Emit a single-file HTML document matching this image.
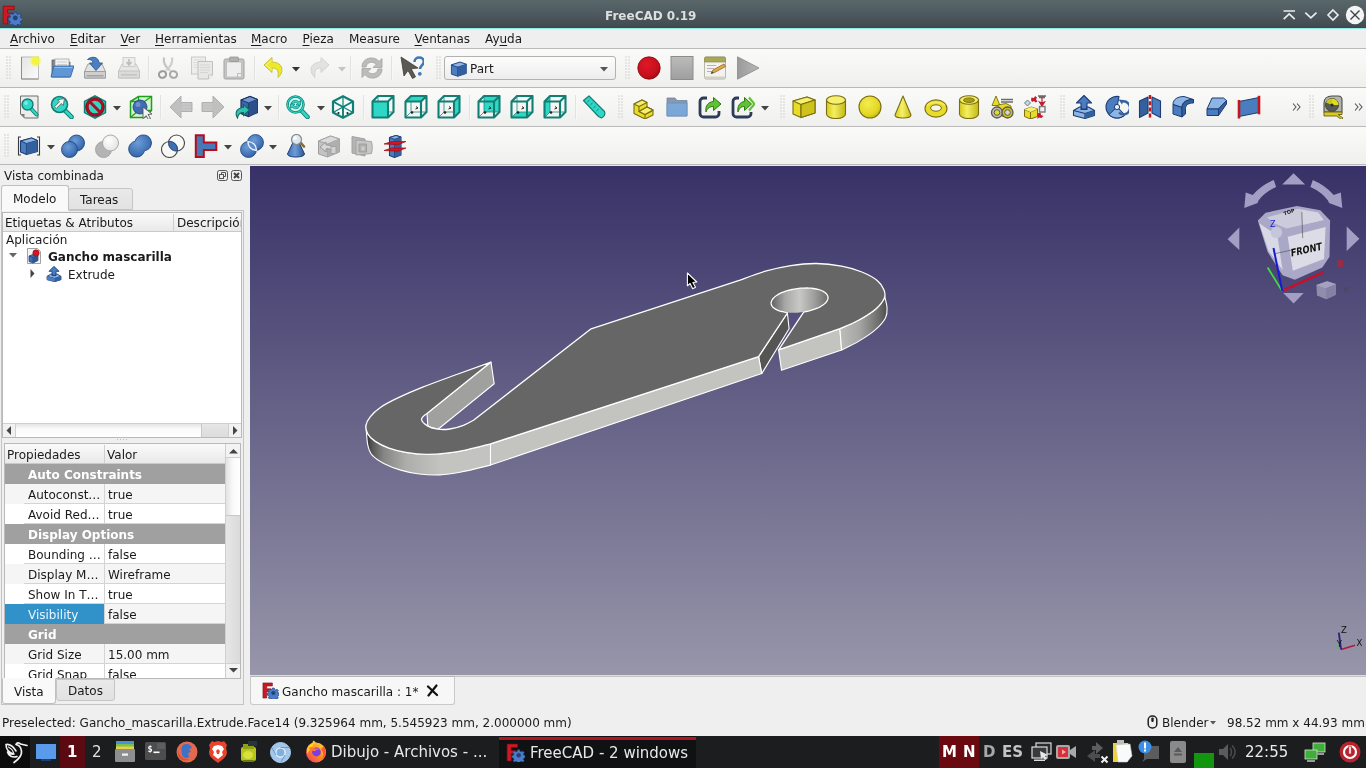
<!DOCTYPE html>
<html><head><meta charset="utf-8"><title>FreeCAD 0.19</title>
<style>
*{box-sizing:border-box;margin:0;padding:0}
html,body{width:1366px;height:768px;overflow:hidden;background:#efefef;font-family:"DejaVu Sans","Liberation Sans",sans-serif;font-size:12px;color:#1a1a1a}
.abs{position:absolute}
#titlebar{position:absolute;left:0;top:0;width:1366px;height:28px;background:linear-gradient(#59676b,#434e53 90%,#3e444c)}
#titleline{position:absolute;left:0;top:28px;width:1366px;height:1px;background:#8eeee2}
#title{position:absolute;left:605px;top:8px;white-space:nowrap;color:#dedede;font-weight:bold;font-size:12px;line-height:17px}
#menubar{position:absolute;left:0;top:29px;width:1366px;height:19px;background:#efefef}
#menubar span{position:absolute;top:2px;line-height:17px;font-size:12px;color:#1a1a1a}
#menubar u{text-decoration:underline;text-underline-offset:2px}
.tbline{position:absolute;left:0;width:1366px;height:1px;background:#b9b9b9}

#viewport{position:absolute;left:250px;top:166px;width:1116px;height:509px;background:linear-gradient(#373167,#9896aa)}
#taskbar{position:absolute;left:0;top:736px;width:1366px;height:32px;background:#1b1d1f}
#status{position:absolute;left:0;top:709px;width:1366px;height:27px;background:#efefef}

.t{position:absolute;white-space:nowrap;line-height:14px;font-size:12px}
#panel{position:absolute;left:0;top:166px;width:250px;height:543px;background:#efefef}
.frame{position:absolute;border:1px solid #b9b9b9}
.tabA{position:absolute;background:#f9f9f9;border:1px solid #c0c0c0;border-radius:3px 3px 0 0}
.tabI{position:absolute;background:linear-gradient(#e9e9e9,#e2e2e2);border:1px solid #c6c6c6;border-radius:3px 3px 0 0}
.hdr{position:absolute;background:linear-gradient(#fafafa,#e9e9e9);border-bottom:1px solid #c9c9c9}
.grp{position:absolute;left:5px;width:220px;height:20px;background:#a0a0a0;color:#fff;font-weight:bold}
.prow{position:absolute;left:5px;width:220px;height:20px;background:#fff}
.prow.alt{background:#f5f5f5}
.prow i{position:absolute;left:19px;right:0;bottom:0;height:1px;background:#d4d4d4}
.prow b{position:absolute;left:99px;top:0;bottom:0;width:1px;background:#d4d4d4}
.prow .t,.grp .t{top:4px}

#mditab{position:absolute;left:250px;top:676px;width:205px;height:29px;background:#f7f7f7;border:1px solid #c9c9c9;border-top-color:#b5b5b5;border-radius:0 0 3px 3px}
#taskbar .t{color:#e8e8e8;font-size:15px;line-height:20px;top:6px}





body{will-change:transform;transform:translateZ(0)}

.tbrow{position:absolute;left:0;width:1366px;height:38px;background:linear-gradient(#fafaf9,#f5f5f4 50%,#efefed)}
.hnd{position:absolute;width:6px;height:24px;background-image:radial-gradient(circle at 1px 1px,#d6d6d6 0.7px,transparent 1px);background-size:3px 3px;opacity:.55}
#combo{position:absolute;left:444px;top:56px;width:172px;height:24px;border:1px solid #b2b2b2;border-radius:3px;background:linear-gradient(#fdfdfd,#ededed)}
</style></head><body>
<div id="titlebar"></div><div id="titleline"></div>
<svg class="abs" style="left:2px;top:5px" width="20" height="20" viewBox="0 0 18 18"><path d="M1 1h10v3.2H5v3h4.5v3H5V17H1z" fill="#cb1a22" stroke="#7d0c12" stroke-width=".6"/><g transform="translate(12 11.6)"><path d="M-1-5.2h2l.4 1.5 1.1.5 1.4-.8 1.4 1.4-.8 1.4.5 1.1 1.5.4v2l-1.5.4-.5 1.1.8 1.4-1.4 1.4-1.4-.8-1.1.5-.4 1.5h-2l-.4-1.5-1.1-.5-1.4.8-1.4-1.4.8-1.4-.5-1.1-1.5-.4v-2l1.5-.4.5-1.1-.8-1.4 1.4-1.4 1.4.8 1.1-.5z" fill="#4a7cc8" stroke="#1f3f78" stroke-width=".7"/><circle r="1.9" fill="#27406e" stroke="#1f3f78" stroke-width=".5"/></g></svg><svg class="abs" style="left:1276px;top:0" width="90" height="28" viewBox="1276 0 90 28"><g fill="none" stroke="#ececec" stroke-width="1.6"><path d="M1283.500 11h11.500M1283.700 19.200l5.500-5.300 5.500 5.300"/><path d="M1305.300 12.600l5.600 5.300 5.600-5.300"/><path d="M1333 10l5 5-5 5-5-5z"/></g><circle cx="1355" cy="15" r="9.200" fill="#f4f4f4"/><path d="M1350.500 10.500l9 9M1359.500 10.500l-9 9" stroke="#3a4448" stroke-width="1.400"/></svg><div id="title">FreeCAD 0.19</div>
<div id="menubar"><span style="left:10px"><u>A</u>rchivo</span><span style="left:70px"><u>E</u>ditar</span><span style="left:120.5px"><u>V</u>er</span><span style="left:155px"><u>H</u>erramientas</span><span style="left:251px"><u>M</u>acro</span><span style="left:302.5px"><u>P</u>ieza</span><span style="left:349px">Measure</span><span style="left:414.5px"><u>V</u>entanas</span><span style="left:485px">Ay<u>u</u>da</span></div>
<!--TB--><div class="tbrow" style="top:49px"></div>
<div class="tbrow" style="top:88px"></div>
<div class="tbrow" style="top:127px"></div>
<div class="hnd" style="left:6px;top:56px"></div>
<svg class="abs" style="left:17.5px;top:56px" width="24" height="24" viewBox="0 0 24 24"><defs><radialGradient id="ng_1"><stop offset="0" stop-color="#f6f628"/><stop offset=".55" stop-color="#f4f440" stop-opacity=".9"/><stop offset="1" stop-color="#f6f670" stop-opacity="0"/></radialGradient><linearGradient id="npg_1" x1="0" y1="0" x2="1" y2="1"><stop offset="0" stop-color="#e4e4e4"/><stop offset="1" stop-color="#fcfcfc"/></linearGradient></defs><rect x="3.500" y="1" width="17" height="22" fill="url(#npg_1)" stroke="#b4b4b4" stroke-width=".9"/><path d="M3.500 1v22h17" fill="none" stroke="#8e8e8e" stroke-width="1"/><circle cx="17.500" cy="5" r="6.500" fill="url(#ng_1)"/></svg>
<svg class="abs" style="left:50px;top:56px" width="24" height="24" viewBox="0 0 24 24"><path d="M2 4h7l1.500 2H20v15H2z" fill="#7c8894" stroke="#58626c" stroke-width=".8"/><rect x="5" y="3" width="14" height="12" fill="#f2f2f2" stroke="#9a9a9a" stroke-width=".7"/><path d="M7 6h10M7 8.500h10M7 11h10" stroke="#c4c4c4" stroke-width=".8"/><path d="M1 21l3-11h20l-3.500 11z" fill="#5f97d6" stroke="#3568a8" stroke-width=".9"/><path d="M4.500 11.500h18" stroke="#9cc2ec" stroke-width=".9"/></svg>
<svg class="abs" style="left:83px;top:56px" width="24" height="24" viewBox="0 0 24 24"><path d="M1.500 15.500l3.500-7.500h14l3.500 7.500v6.500h-21z" fill="#e2e2e2" stroke="#9a9a9a" stroke-width=".9"/><path d="M1.500 15.500h21v6.500h-21z" fill="#cfcfcf" stroke="#9a9a9a" stroke-width=".9"/><rect x="3.500" y="19" width="17" height="1.500" fill="#a2a2a2"/><path d="M4.500 3.500C9 -.5 16 1 16 7h3.500l-6.500 7.500L6.500 7H10c0-2.500-2.500-4-5.500-3.500z" fill="#4a7fc0" stroke="#2c5a94" stroke-width=".9"/></svg>
<svg class="abs" style="left:116.5px;top:56px" width="24" height="24" viewBox="0 0 24 24"><g opacity=".62"><path d="M1.500 15l3.500-7h14l3.500 7v7h-21z" fill="#dedede" stroke="#a4a4a4" stroke-width=".9"/><path d="M1.500 15h21v7h-21z" fill="#cdcdcd" stroke="#a4a4a4" stroke-width=".9"/><rect x="4" y="18" width="16" height="1.600" fill="#aaaaaa"/><rect x="6" y="1.500" width="12" height="9" fill="#e8e8e8" stroke="#a8a8a8" stroke-width=".8"/><path d="M12 3v5M9.500 6l2.500 3 2.500-3" stroke="#9a9a9a" stroke-width="1.600" fill="none"/></g></svg>
<div class="abs" style="left:148px;top:56px;width:1px;height:24px;background:#e2e2e2"></div><div class="abs" style="left:149px;top:56px;width:1px;height:24px;background:#f8f8f8"></div>
<svg class="abs" style="left:156px;top:56px" width="24" height="24" viewBox="0 0 24 24"><g fill="none" stroke="#a9a9a9"><path d="M8 1.500c-1 5 1 9 6 13" stroke-width="2.200" stroke="#c4c4c4"/><path d="M16 1.500c1 5-1 9-6 13" stroke-width="2.200" stroke="#cfcfcf"/><ellipse cx="6.500" cy="18.500" rx="3.600" ry="3.300" stroke-width="2" transform="rotate(-25 6.500 18.500)" stroke="#9a9a9a"/><ellipse cx="17.500" cy="18.500" rx="3.600" ry="3.300" stroke-width="2" transform="rotate(25 17.500 18.500)" stroke="#a8a8a8"/></g></svg>
<svg class="abs" style="left:190px;top:56px" width="24" height="24" viewBox="0 0 24 24"><g opacity=".75"><rect x="1.500" y="1" width="14" height="17" fill="#ececec" stroke="#b4b4b4" stroke-width=".9"/><path d="M3.500 4h10M3.500 6.500h10M3.500 9h10M3.500 11.500h10" stroke="#cfcfcf" stroke-width=".8"/><path d="M8 5.500h14.500v13.500l-4 4H8z" fill="#e4e4e4" stroke="#a8a8a8" stroke-width=".9"/><path d="M10 9h10M10 11.500h10M10 14h10M10 16.500h8" stroke="#c4c4c4" stroke-width=".8"/><path d="M18.500 23v-4h4" fill="#f6f6f6" stroke="#a8a8a8" stroke-width=".8"/></g></svg>
<svg class="abs" style="left:222px;top:56px" width="24" height="24" viewBox="0 0 24 24"><rect x="2" y="3" width="20" height="20" rx="1.500" fill="#c6c6c6" stroke="#a2a2a2" stroke-width="1"/><rect x="4.500" y="6" width="15" height="15" fill="#eeeeee" stroke="#b4b4b4" stroke-width=".7"/><rect x="7.500" y="1" width="9" height="4.500" rx="1" fill="#b0b0b0" stroke="#949494" stroke-width=".8"/><path d="M15.500 21v-3.500h4" fill="none" stroke="#b0b0b0" stroke-width=".8"/></svg>
<div class="abs" style="left:254px;top:56px;width:1px;height:24px;background:#e2e2e2"></div><div class="abs" style="left:255px;top:56px;width:1px;height:24px;background:#f8f8f8"></div>
<svg class="abs" style="left:261.5px;top:56px" width="24" height="24" viewBox="0 0 24 24"><path d="M10 1.500L2 9l8 7.500V12c5 0 7 2 6 9.500 6-5 6-15-6-15.500z" fill="#ece82a" stroke="#c8c232" stroke-width="1"/><path d="M10 4L4 9l6 5" fill="none" stroke="#f8f690" stroke-width="1"/></svg>
<svg class="abs" style="left:292px;top:67px" width="8" height="5"><path d="M0 0h8l-4 4.500z" fill="#333"/></svg>
<svg class="abs" style="left:307px;top:56px" width="24" height="24" viewBox="0 0 24 24"><g opacity=".55"><path d="M14 1.500L22 9l-8 7.500V12c-5 0-7 2-6 9.500-6-5-6-15 6-15.500z" fill="#d4d4d4" stroke="#b8b8b8" stroke-width="1"/></g></svg>
<svg class="abs" style="left:337.5px;top:67px" width="8" height="5"><path d="M0 0h8l-4 4.500z" fill="#c4c4c4"/></svg>
<div class="abs" style="left:350px;top:56px;width:1px;height:24px;background:#e2e2e2"></div><div class="abs" style="left:351px;top:56px;width:1px;height:24px;background:#f8f8f8"></div>
<svg class="abs" style="left:359.5px;top:56px" width="24" height="24" viewBox="0 0 24 24"><g fill="#bcbcbc" stroke="#a2a2a2" stroke-width=".8"><path d="M2 11C2 5 7 1.500 12.500 2c3 .3 5 1.500 6.500 3.500L22 2.500v9h-9l3-3c-1-1.500-2.500-2.300-4.500-2.300C8.500 6.200 6.500 8 6 11z"/><path d="M22 13c0 6-5 9.500-10.500 9-3-.3-5-1.500-6.500-3.500L2 21.500v-9h9l-3 3c1 1.500 2.500 2.300 4.500 2.300 3 0 5-1.800 5.500-4.800z"/></g></svg>
<div class="abs" style="left:391px;top:56px;width:1px;height:24px;background:#e2e2e2"></div><div class="abs" style="left:392px;top:56px;width:1px;height:24px;background:#f8f8f8"></div>
<svg class="abs" style="left:399.5px;top:56px" width="24" height="24" viewBox="0 0 24 24"><path d="M1 1l3 19 4-5.500 4.500 8 3-1.700-4.300-8L18 12z" fill="#5a5a52" stroke="#3c3c38" stroke-width=".8"/><path d="M14.500 6c0-3 2.200-4.500 4.700-4.500 2.600 0 4.600 1.700 4.600 4.200 0 3.500-3.800 3.800-3.800 7.300" fill="none" stroke="#3f78b8" stroke-width="2.600"/><circle cx="19.800" cy="17.800" r="1.900" fill="#3f78b8"/></svg>
<div class="hnd" style="left:436px;top:56px"></div>
<div id="combo"></div>
<svg class="abs" style="left:449.5px;top:59.5px" width="17" height="17" viewBox="0 0 24 24"><path d="M2 7l12-4 9 3v13l-12 4-9-3z" fill="#4a7ec0" stroke="#1e3f78" stroke-width="1.200"/><path d="M2 7l9 3 12-4M11 10v13" fill="none" stroke="#1e3f78" stroke-width="1.200"/><path d="M2 7l9 3 12-4-9-3z" fill="#8fb6e6" stroke="#1e3f78" stroke-width="1"/><path d="M11 10l12-4v13l-12 4z" fill="#335f9e"/></svg>
<div class="t" style="left:470px;top:62px">Part</div>
<svg class="abs" style="left:600.3px;top:67px" width="8" height="5"><path d="M0 0h8l-4 4.500z" fill="#555"/></svg>
<div class="hnd" style="left:625px;top:56px"></div>
<svg class="abs" style="left:637px;top:56px" width="24" height="24" viewBox="0 0 24 24"><defs><radialGradient id="rg_13" cx=".4" cy=".35" r=".7"><stop offset="0" stop-color="#e01828"/><stop offset=".75" stop-color="#c4101c"/><stop offset="1" stop-color="#960a14"/></radialGradient></defs><circle cx="12" cy="12" r="11.200" fill="url(#rg_13)" stroke="#8a0810" stroke-width=".8"/></svg>
<svg class="abs" style="left:670px;top:56px" width="24" height="24" viewBox="0 0 24 24"><defs><linearGradient id="sg_14" x1="0" y1="0" x2="0" y2="1"><stop offset="0" stop-color="#bcbcbc"/><stop offset="1" stop-color="#9e9e9e"/></linearGradient></defs><rect x="1" y=".5" width="22" height="23" fill="url(#sg_14)" stroke="#8c8c8c" stroke-width="1"/></svg>
<svg class="abs" style="left:703px;top:56px" width="24" height="24" viewBox="0 0 24 24"><rect x="1.500" y="1" width="21" height="22" rx="1.500" fill="#f2f2ee" stroke="#b0b0a4" stroke-width=".9"/><path d="M1.500 2.500a1.500 1.500 0 0 1 1.500-1.500h18a1.500 1.500 0 0 1 1.500 1.500V6h-21z" fill="#a8a858" stroke="#8c8c44" stroke-width=".7"/><rect x="1.500" y="20.500" width="21" height="2.500" fill="#cfcfc4"/><path d="M4 9.500h9M4 12.500h7M4 15.500h6" stroke="#b4b4b4" stroke-width="1"/><path d="M8 17.500l2-3.500L21 8l1.500 2.500L11.500 16.500z" fill="#e4a84a" stroke="#94602a" stroke-width=".8"/><path d="M8 17.500l1.200-2.100 1.300 1.600z" fill="#3a3a3a"/></svg>
<svg class="abs" style="left:736px;top:56px" width="24" height="24" viewBox="0 0 24 24"><defs><linearGradient id="pg_16" x1="0" y1="0" x2="1" y2="0"><stop offset="0" stop-color="#9a9a9a"/><stop offset="1" stop-color="#b8b8b8"/></linearGradient></defs><path d="M1.500 .8L23 12 1.500 23.200z" fill="url(#pg_16)" stroke="#909090" stroke-width=".9"/></svg>
<div class="hnd" style="left:4px;top:95px"></div>
<svg class="abs" style="left:17px;top:95px" width="24" height="24" viewBox="0 0 24 24"><path d="M3.500 1h17.500v22H7.500l-4-4z" fill="#ececec" stroke="#6e6e6e" stroke-width="1"/><path d="M3.500 19h4v4z" fill="#7c7c7c"/><path d="M13 12.500l6.500 7" stroke="#127f74" stroke-width="4" stroke-linecap="round"/><path d="M13 12.500l6.500 7" stroke="#2fd8c6" stroke-width="2.200" stroke-linecap="round"/><circle cx="10.500" cy="9.500" r="5.500" fill="#2fd8c6" stroke="#127f74" stroke-width="1.400"/><circle cx="9" cy="8" r="2" fill="#8cf0e4" opacity=".8"/></svg>
<svg class="abs" style="left:50px;top:95px" width="24" height="24" viewBox="0 0 24 24"><path d="M14 14.500l7.500 7.500" stroke="#127f74" stroke-width="4.600" stroke-linecap="round"/><path d="M14 14.500l7.500 7.500" stroke="#2fd8c6" stroke-width="2.600" stroke-linecap="round"/><circle cx="9.500" cy="9.500" r="8" fill="#2fd8c6" stroke="#127f74" stroke-width="1.600"/><path d="M14.500 3.500l-1.200 7-2-2-5 5-1.800-1.800 5-5-2-2z" fill="#f4f4f4" stroke="#5a5a5a" stroke-width=".8"/></svg>
<svg class="abs" style="left:83px;top:95px" width="24" height="24" viewBox="0 0 24 24"><path d="M12 .8l10.500 5.600v11.200L12 23.200 1.500 17.600V6.400z" fill="#2fd8c6" stroke="#127f74" stroke-width="1.400"/><circle cx="12" cy="12" r="7.800" fill="none" stroke="#b00c20" stroke-width="3"/><path d="M6.800 6.800l10.400 10.400" stroke="#b00c20" stroke-width="3"/><circle cx="12" cy="12" r="9.400" fill="none" stroke="#5a0810" stroke-width=".7"/></svg>
<svg class="abs" style="left:113px;top:106px" width="8" height="5"><path d="M0 0h8l-4 4.500z" fill="#444"/></svg>
<svg class="abs" style="left:128.5px;top:95px" width="24" height="24" viewBox="0 0 24 24"><path d="M1.500 6.500l8-5h13v14l-7 7h-14z" fill="#d6f4d0" stroke="#1ea01e" stroke-width="1.500"/><path d="M1.500 6.500h14v16M15.500 6.500l7-5M9.500 1.500v14h13M9.500 15.500l-8 7" fill="none" stroke="#1ea01e" stroke-width="1.300"/><circle cx="11" cy="12" r="7" fill="#3f6cb4" stroke="#1e3f78" stroke-width=".8"/><circle cx="9" cy="9.500" r="2.500" fill="#7ea4dc" opacity=".7"/><path d="M14 12l9 7-4 .5 2.500 4-2 1.200-2.500-4-3 3z" fill="#f4f4f4" stroke="#555" stroke-width=".9"/></svg>
<div class="abs" style="left:160px;top:95px;width:1px;height:24px;background:#e2e2e2"></div><div class="abs" style="left:161px;top:95px;width:1px;height:24px;background:#f8f8f8"></div>
<svg class="abs" style="left:168.5px;top:95px" width="24" height="24" viewBox="0 0 24 24"><path d="M1 12L12 1v6.500h11v9H12V23z" fill="#c0c0c0" stroke="#b0b0b0" stroke-width="1"/><path d="M13 9h9M13 12h9M13 15h9" stroke="#d0d0d0" stroke-width=".8"/></svg>
<svg class="abs" style="left:200.5px;top:95px" width="24" height="24" viewBox="0 0 24 24"><path d="M23 12L12 1v6.500H1v9h11V23z" fill="#c0c0c0" stroke="#b0b0b0" stroke-width="1"/><path d="M2 9h9M2 12h9M2 15h9" stroke="#d0d0d0" stroke-width=".8"/></svg>
<svg class="abs" style="left:233.5px;top:95px" width="24" height="24" viewBox="0 0 24 24"><path d="M7 5l9-3.500 7.500 3v13l-9 4-7.500-3z" fill="#3d68ac" stroke="#182f5c" stroke-width="1.200"/><path d="M7 5l7.500 3 9-3.500-7.500-3z" fill="#6e98d4" stroke="#182f5c" stroke-width="1"/><path d="M14.500 8v13.500" stroke="#182f5c" stroke-width="1.200"/><path d="M14.500 8l9-3.500v13l-9 4z" fill="#2d508c"/><path d="M3.500 23c-3-5-1-10 6-10.500V9.500l6 5.500-6 5.500V17.500c-3.500 0-5.500 2-6 5.500z" fill="#2ec4b0" stroke="#0e6a60" stroke-width="1.100"/></svg>
<svg class="abs" style="left:264px;top:106px" width="8" height="5"><path d="M0 0h8l-4 4.500z" fill="#444"/></svg>
<div class="abs" style="left:278px;top:95px;width:1px;height:24px;background:#e2e2e2"></div><div class="abs" style="left:279px;top:95px;width:1px;height:24px;background:#f8f8f8"></div>
<svg class="abs" style="left:286px;top:95px" width="24" height="24" viewBox="0 0 24 24"><path d="M14.500 14.500l7 7.500" stroke="#127f74" stroke-width="4.600" stroke-linecap="round"/><path d="M14.500 14.500l7 7.500" stroke="#2fd8c6" stroke-width="2.600" stroke-linecap="round"/><circle cx="9.500" cy="9.500" r="8" fill="#c8f4ee" stroke="#127f74" stroke-width="2.600"/><circle cx="9.500" cy="9.500" r="8" fill="none" stroke="#2fd8c6" stroke-width="1.200"/><path d="M5 8.500c.5-3 5-4.500 8-1.500l1.500-1.500v4.500H10l1.500-1.500c-1.500-1.500-4-1.200-4.500 0zM14 10.500c-.5 3-5 4.500-8 1.500l-1.500 1.500V9h4.500l-1.500 1.500c1.500 1.500 4 1.200 4.500 0z" fill="#2fd8c6" stroke="#127f74" stroke-width=".7"/></svg>
<svg class="abs" style="left:316.5px;top:106px" width="8" height="5"><path d="M0 0h8l-4 4.500z" fill="#444"/></svg>
<svg class="abs" style="left:331.3px;top:95px" width="24" height="24" viewBox="0 0 24 24"><path d="M12 1.200l10 5.300v11L12 22.800 2 17.500v-11z" fill="#f2fbf9" stroke="#127f74" stroke-width="2.200" stroke-linejoin="round"/><path d="M12 1v11M12 12l10 5.500M12 12L2 17.500" fill="none" stroke="#127f74" stroke-width="1.200"/><path d="M2 6.500L12 12l10-5.500M12 12v11" fill="none" stroke="#127f74" stroke-width="1.900"/><circle cx="7.500" cy="18" r="1.100" fill="#222"/><circle cx="16.500" cy="18" r="1.100" fill="#222"/></svg>
<div class="abs" style="left:363px;top:95px;width:1px;height:24px;background:#e2e2e2"></div><div class="abs" style="left:364px;top:95px;width:1px;height:24px;background:#f8f8f8"></div>
<svg class="abs" style="left:371px;top:95px" width="24" height="24" viewBox="0 0 24 24"><path d="M7 1V17H22.5M7 17L1.5 22.5" fill="none" stroke="#127f74" stroke-width="1" opacity=".75"/><path d="M1.5 6.5H17V22.5H1.5z" fill="#2fd8c6"/><path d="M1.5 6.5H17V22.5H1.5zM1.5 6.5L7 1H22.5L17 6.5M22.5 1V17L17 22.5" fill="none" stroke="#127f74" stroke-width="2.100" stroke-linejoin="round"/></svg>
<svg class="abs" style="left:404px;top:95px" width="24" height="24" viewBox="0 0 24 24"><path d="M7 1V17H22.5M7 17L1.5 22.5" fill="none" stroke="#127f74" stroke-width="1" opacity=".75"/><circle cx="8" cy="17.500" r="1.300" fill="#222"/><path d="M12 11.500l2 1.500-2.500 1" stroke="#222" stroke-width="1" fill="none"/><path d="M1.5 6.5L7 1L22.5 1L17 6.5z" fill="#2fd8c6"/><path d="M1.5 6.5H17V22.5H1.5zM1.5 6.5L7 1H22.5L17 6.5M22.5 1V17L17 22.5" fill="none" stroke="#127f74" stroke-width="2.100" stroke-linejoin="round"/></svg>
<svg class="abs" style="left:437px;top:95px" width="24" height="24" viewBox="0 0 24 24"><path d="M7 1V17H22.5M7 17L1.5 22.5" fill="none" stroke="#127f74" stroke-width="1" opacity=".75"/><circle cx="8" cy="17.500" r="1.300" fill="#222"/><path d="M12 11.500l2 1.500-2.500 1" stroke="#222" stroke-width="1" fill="none"/><path d="M17 6.5L22.5 1L22.5 17L17 22.5z" fill="#2fd8c6"/><path d="M1.5 6.5H17V22.5H1.5zM1.5 6.5L7 1H22.5L17 6.5M22.5 1V17L17 22.5" fill="none" stroke="#127f74" stroke-width="2.100" stroke-linejoin="round"/></svg>
<div class="abs" style="left:469px;top:95px;width:1px;height:24px;background:#e2e2e2"></div><div class="abs" style="left:470px;top:95px;width:1px;height:24px;background:#f8f8f8"></div>
<svg class="abs" style="left:477px;top:95px" width="24" height="24" viewBox="0 0 24 24"><path d="M7 1H22.5V17H7z" fill="#2fd8c6"/><path d="M7 1V17H22.5M7 17L1.5 22.5" fill="none" stroke="#127f74" stroke-width="1" opacity=".75"/><circle cx="8" cy="17.500" r="1.300" fill="#222"/><path d="M12 11.500l2 1.500-2.500 1" stroke="#222" stroke-width="1" fill="none"/><path d="M1.5 6.5H17V22.5H1.5zM1.5 6.5L7 1H22.5L17 6.5M22.5 1V17L17 22.5" fill="none" stroke="#127f74" stroke-width="2.100" stroke-linejoin="round"/></svg>
<svg class="abs" style="left:510px;top:95px" width="24" height="24" viewBox="0 0 24 24"><path d="M1.5 22.5L17 22.5L22.5 17L7 17z" fill="#2fd8c6"/><path d="M7 1V17H22.5M7 17L1.5 22.5" fill="none" stroke="#127f74" stroke-width="1" opacity=".75"/><circle cx="8" cy="17.500" r="1.300" fill="#222"/><path d="M12 11.500l2 1.500-2.500 1" stroke="#222" stroke-width="1" fill="none"/><path d="M1.5 6.5H17V22.5H1.5zM1.5 6.5L7 1H22.5L17 6.5M22.5 1V17L17 22.5" fill="none" stroke="#127f74" stroke-width="2.100" stroke-linejoin="round"/></svg>
<svg class="abs" style="left:543px;top:95px" width="24" height="24" viewBox="0 0 24 24"><path d="M1.5 6.5L7 1L7 17L1.5 22.5z" fill="#2fd8c6"/><path d="M7 1V17H22.5M7 17L1.5 22.5" fill="none" stroke="#127f74" stroke-width="1" opacity=".75"/><circle cx="8" cy="17.500" r="1.300" fill="#222"/><path d="M12 11.500l2 1.500-2.500 1" stroke="#222" stroke-width="1" fill="none"/><path d="M1.5 6.5H17V22.5H1.5zM1.5 6.5L7 1H22.5L17 6.5M22.5 1V17L17 22.5" fill="none" stroke="#127f74" stroke-width="2.100" stroke-linejoin="round"/></svg>
<div class="abs" style="left:575px;top:95px;width:1px;height:24px;background:#e2e2e2"></div><div class="abs" style="left:576px;top:95px;width:1px;height:24px;background:#f8f8f8"></div>
<svg class="abs" style="left:582px;top:95px" width="24" height="24" viewBox="0 0 24 24"><path d="M1.500 5.500L7 1l15.500 15.500c1 2 0 5.500-3 6.500l-3-1.500z" fill="#2fd8c6" stroke="#127f74" stroke-width="1.200" stroke-linejoin="round"/><path d="M7.500 5l-2 1.800M10.500 8l-2 1.800M13.500 11l-2 1.800M16.500 14l-2 1.800" stroke="#127f74" stroke-width="1"/></svg>
<div class="hnd" style="left:618px;top:95px"></div>
<svg class="abs" style="left:632px;top:95px" width="24" height="24" viewBox="0 0 24 24"><g stroke="#7a6e10" stroke-width="1.100" stroke-linejoin="round"><path d="M2 9l8-4 5 2.500v4.500l6 3v5l-8 4-11-5.500z" fill="#e8dc28"/><path d="M2 9l5 2.500 8-4-5-2.500z" fill="#f6f070"/><path d="M7 11.500v5l6 3 8-4" fill="none"/><path d="M7 16.500l8-4.500 6 3" fill="none"/><path d="M13 19.500V24" fill="none"/><path d="M7 16.500l6 3 8-4.500-6-3z" fill="#f6f070"/></g></svg>
<svg class="abs" style="left:665px;top:95px" width="24" height="24" viewBox="0 0 24 24"><g opacity=".9"><path d="M2 3h8l2 2.500h10V21H2z" fill="#7c8ea8" stroke="#64788f" stroke-width=".8"/><path d="M2 8h20v13H2z" fill="#6f9fd6" stroke="#5c86b8" stroke-width=".8"/></g></svg>
<svg class="abs" style="left:698px;top:95px" width="24" height="24" viewBox="0 0 24 24"><path d="M9 3H5.500A3.500 3.500 0 0 0 2 6.500v12A3.500 3.500 0 0 0 5.500 22h12a3.500 3.500 0 0 0 3.500-3.500V16" fill="none" stroke="#2a3c58" stroke-width="2.800"/><path d="M8 17c-1-6 2-10 7.500-10.500V2.500l7.500 6.500-7.500 6.500v-4c-4 0-6 1.500-7.500 5.500z" fill="#5ec232" stroke="#2a7a14" stroke-width="1"/></svg>
<svg class="abs" style="left:731px;top:95px" width="24" height="24" viewBox="0 0 24 24"><path d="M8 3H5.500A3.500 3.500 0 0 0 2 6.500v12A3.500 3.500 0 0 0 5.500 22h11a3.500 3.500 0 0 0 3.500-3.500V17" fill="none" stroke="#2a3c58" stroke-width="2.800"/><path d="M18 2.500l5.500 6.500-5.500 6.500" fill="none" stroke="#5ec232" stroke-width="2.200"/><path d="M7 17c-1-6 2-10 6.500-10.500V2.500l7 6.500-7 6.500v-4c-3.500 0-5 1.500-6.500 5.500z" fill="#5ec232" stroke="#2a7a14" stroke-width="1"/></svg>
<svg class="abs" style="left:760.5px;top:106px" width="8" height="5"><path d="M0 0h8l-4 4.500z" fill="#444"/></svg>
<div class="hnd" style="left:780px;top:95px"></div>
<svg class="abs" style="left:791.7px;top:95px" width="24" height="24" viewBox="0 0 24 24"><g stroke="#7a6e10" stroke-width="1.100" stroke-linejoin="round"><path d="M1 6l14-4 8 3v13l-14 4.500-8-3.500z" fill="#e8dc28"/><path d="M1 6l8 3.500 14-4.500-8-3z" fill="#f6f070"/><path d="M9 9.500v13" fill="none"/><path d="M9 9.500l14-4.500v13l-14 4.500z" fill="#cfc21c"/></g></svg>
<svg class="abs" style="left:824.3px;top:95px" width="24" height="24" viewBox="0 0 24 24"><defs><linearGradient id="yc_38" x1="0" y1="0" x2="1" y2="0"><stop offset="0" stop-color="#d8cc20"/><stop offset=".4" stop-color="#f4ee60"/><stop offset="1" stop-color="#c4b818"/></linearGradient></defs><path d="M2.500 5v14c0 2.500 4.200 4.500 9.500 4.500s9.500-2 9.500-4.500V5z" fill="url(#yc_38)" stroke="#7a6e10" stroke-width="1.100"/><ellipse cx="12" cy="5" rx="9.500" ry="4.200" fill="#f6f070" stroke="#7a6e10" stroke-width="1.100"/></svg>
<svg class="abs" style="left:858px;top:95px" width="24" height="24" viewBox="0 0 24 24"><defs><radialGradient id="ys_39" cx=".4" cy=".35" r=".7"><stop offset="0" stop-color="#f2ec50"/><stop offset=".7" stop-color="#e4d824"/><stop offset="1" stop-color="#c0b418"/></radialGradient></defs><circle cx="12" cy="12" r="11" fill="url(#ys_39)" stroke="#7a6e10" stroke-width="1.100"/></svg>
<svg class="abs" style="left:891px;top:95px" width="24" height="24" viewBox="0 0 24 24"><defs><linearGradient id="yn_40" x1="0" y1="0" x2="1" y2="0"><stop offset="0" stop-color="#d8cc20"/><stop offset=".45" stop-color="#f6f068"/><stop offset="1" stop-color="#c8bc18"/></linearGradient></defs><path d="M12 1L4 20c0 1.800 3.500 3 8 3s8-1.200 8-3z" fill="url(#yn_40)" stroke="#7a6e10" stroke-width="1.100" stroke-linejoin="round"/></svg>
<svg class="abs" style="left:924px;top:95px" width="24" height="24" viewBox="0 0 24 24"><ellipse cx="12" cy="13.500" rx="11" ry="8.600" fill="#e8dc28" stroke="#7a6e10" stroke-width="1.100"/><ellipse cx="12" cy="13" rx="5.400" ry="3.200" fill="#f4f4f0" stroke="#7a6e10" stroke-width="1"/><path d="M3 11c2-4 14-5 18-.5" fill="none" stroke="#f6f070" stroke-width="1.400" opacity=".8"/></svg>
<svg class="abs" style="left:956.6px;top:95px" width="24" height="24" viewBox="0 0 24 24"><defs><linearGradient id="yt_42" x1="0" y1="0" x2="1" y2="0"><stop offset="0" stop-color="#d4c81e"/><stop offset=".4" stop-color="#f4ee60"/><stop offset="1" stop-color="#c4b818"/></linearGradient></defs><path d="M2.500 5v14c0 2.500 4.200 4.500 9.500 4.500s9.500-2 9.500-4.500V5z" fill="url(#yt_42)" stroke="#7a6e10" stroke-width="1.100"/><ellipse cx="12" cy="5" rx="9.500" ry="4.200" fill="#f6f070" stroke="#7a6e10" stroke-width="1.100"/><ellipse cx="12" cy="5.200" rx="5.500" ry="2.300" fill="#a89c14" stroke="#7a6e10" stroke-width=".9"/></svg>
<svg class="abs" style="left:990px;top:95px" width="24" height="24" viewBox="0 0 24 24"><path d="M6 1l-4 9.500h8z" fill="#e8dc28" stroke="#7a6e10" stroke-width=".9"/><path d="M11 4.500h12M11 7h12" stroke="#6c6c6c" stroke-width="1.600"/><path d="M8 10l8-1.500 5 2.500v8l-8 2.500-5-3z" fill="#e8dc28" stroke="#7a6e10" stroke-width=".9"/><circle cx="7" cy="17.500" r="5.500" fill="#bdbdb0" stroke="#5a5a54" stroke-width="1.300"/><circle cx="7" cy="17.500" r="2.800" fill="#e8dc28" stroke="#5a5a54" stroke-width="1"/><circle cx="17.500" cy="17.500" r="5.500" fill="#cfc21c" stroke="#5a5a54" stroke-width="1.300"/><circle cx="17.500" cy="17.500" r="2.800" fill="#d8d8c8" stroke="#5a5a54" stroke-width="1"/></svg>
<svg class="abs" style="left:1023px;top:95px" width="24" height="24" viewBox="0 0 24 24"><path d="M1.500 14.500l7-2.500 6 2v7.500l-7 2.500-6-2.500z" fill="#e8dc28" stroke="#7a6e10" stroke-width="1"/><path d="M1.500 14.500l6 2.500 7-3M7.500 17v7" fill="none" stroke="#7a6e10" stroke-width="1"/><path d="M1.500 14.500l6 2.500 7-3-6-2z" fill="#f6f070"/><path d="M4.500 5l3 3-3 3-3-3z" fill="#c8d4dc" stroke="#6a7a88" stroke-width="1"/><path d="M8.500 2.500l2.500 .5 1-2 2 1.500-1 2 1.500 2-2 1-1.500-1.500-2 1-1-2z" fill="#c8182c"/><path d="M15 1h8M16 2.500h6" stroke="#6a6a6a" stroke-width="1.600"/><path d="M19 3v5l-2.500-1 2.500 4 2.500-4-2.500 1" fill="#c8182c" stroke="#c8182c" stroke-width="1.200"/><rect x="16.500" y="11.500" width="5.500" height="5.500" fill="#f0f0f0" stroke="#7a7a7a" stroke-width="1.400"/><path d="M14.500 18.500l3-1 .5 2.500 2.500 1-2 2-2.500-.5-1.500 1.500z" fill="#c8182c"/></svg>
<div class="hnd" style="left:1060px;top:95px"></div>
<svg class="abs" style="left:1071.7px;top:95px" width="24" height="24" viewBox="0 0 24 24"><path d="M12 .5L4.500 8H9v6h6V8h4.500z" fill="#4a7cc0" stroke="#1c3c74" stroke-width="1.100" stroke-linejoin="round"/><path d="M1.500 15.500l6-3.500H9v2.500h6V12h1.500l6 3.500v5l-9.500 3-11.500-3z" fill="#8cb4e4" stroke="#1c3c74" stroke-width="1.100" stroke-linejoin="round"/><path d="M1.500 15.500l11.500 3 9.500-3M13 18.500v5" fill="none" stroke="#1c3c74" stroke-width="1.100"/><path d="M13 18.500l9.500-3v5l-9.500 3z" fill="#35609e"/></svg>
<svg class="abs" style="left:1105px;top:95px" width="24" height="24" viewBox="0 0 24 24"><path d="M12 12L14 1.500C7 .5 1 5.500 1 12c0 6 5 11 11 11 3 0 5.500-1 7.500-3z" fill="#4a7cc0" stroke="#1c3c74" stroke-width="1.100" stroke-linejoin="round"/><path d="M12 12L4 19.500c2 2 4.800 3.500 8 3.500 3 0 5.500-1 7.500-3z" fill="#8cb4e4" stroke="#1c3c74" stroke-width="1"/><circle cx="12" cy="12" r="2.600" fill="#e8eef8" stroke="#1c3c74" stroke-width="1"/><path d="M17 6.500a6.500 6.500 0 1 1-3 11" fill="none" stroke="#35609e" stroke-width="2.400"/><path d="M13.500 4.500l5 .5-1.500 4.500z" fill="#35609e"/></svg>
<svg class="abs" style="left:1138px;top:95px" width="24" height="24" viewBox="0 0 24 24"><path d="M1.500 6l8.500-4v16l-8.500 4.500z" fill="#35609e" stroke="#1c3c74" stroke-width="1.100" stroke-linejoin="round"/><path d="M22.500 6L14 2v16l8.500 4.500z" fill="#4a7cc0" stroke="#1c3c74" stroke-width="1.100" stroke-linejoin="round"/><path d="M12 0v24" stroke="#c4141c" stroke-width="2.400" stroke-dasharray="4 2.200"/></svg>
<svg class="abs" style="left:1171px;top:95px" width="24" height="24" viewBox="0 0 24 24"><path d="M2 9.500C2 4 7 1.500 13 1.500l9.500 3C16 4.500 11 7 11 12.500z" fill="#8cb4e4" stroke="#1c3c74" stroke-width="1" stroke-linejoin="round"/><path d="M2 9.500l9 3V22l-9-3z" fill="#4a7cc0" stroke="#1c3c74" stroke-width="1" stroke-linejoin="round"/><path d="M11 12.500C11 7 16 4.500 22.500 4.500V8c-5 0-8 2-8 5.500V19L11 22z" fill="#35609e" stroke="#1c3c74" stroke-width="1" stroke-linejoin="round"/></svg>
<svg class="abs" style="left:1204px;top:95px" width="24" height="24" viewBox="0 0 24 24"><path d="M8 3h11.500l3 2.500-8 8.500H3z" fill="#8cb4e4" stroke="#1c3c74" stroke-width="1" stroke-linejoin="round"/><path d="M3 14h11.500v6.500H3z" fill="#4a7cc0" stroke="#1c3c74" stroke-width="1" stroke-linejoin="round"/><path d="M14.500 14l8-8.500V9l-8 11.500z" fill="#35609e" stroke="#1c3c74" stroke-width="1" stroke-linejoin="round"/></svg>
<svg class="abs" style="left:1237px;top:95px" width="24" height="24" viewBox="0 0 24 24"><path d="M2 6.500l20-4v15l-20 4z" fill="#4a7cc0" stroke="#1c3c74" stroke-width="1"/><path d="M2 5v18.500" stroke="#c4141c" stroke-width="2.600"/><path d="M22 .8v18.500" stroke="#c4141c" stroke-width="2.600"/></svg>
<svg class="abs" style="left:1291.5px;top:103px" width="9" height="8"><path d="M1 .5l3 3.500-3 3.500M5 .5l3 3.500-3 3.500" fill="none" stroke="#555" stroke-width="1.100"/></svg>
<div class="hnd" style="left:1309px;top:95px"></div>
<svg class="abs" style="left:1321px;top:95px" width="24" height="24" viewBox="0 0 24 24"><path d="M3 8c0-4 3-7 8-7h6c3 0 4 2 4 4v12H3z" fill="#b4b4ac" stroke="#4c4c48" stroke-width="1.100"/><circle cx="11" cy="10" r="6.500" fill="#5a5a54" stroke="#3a3a38" stroke-width=".9"/><path d="M11 10V3.500a6.500 6.500 0 0 1 6.500 6.500z" fill="#dcdc20"/><path d="M11 10l-6-2.500A6.500 6.500 0 0 1 11 3.500z" fill="#c8c81c"/><circle cx="11" cy="10" r="1.600" fill="#2a2a28"/><path d="M3 17h18v2.500h-4l5 3.500-1.500 1.500-5-3.500H3z" fill="#d8c828" stroke="#6a6210" stroke-width=".9"/></svg>
<svg class="abs" style="left:1353.5px;top:103px" width="9" height="8"><path d="M1 .5l3 3.500-3 3.500M5 .5l3 3.500-3 3.500" fill="none" stroke="#555" stroke-width="1.100"/></svg>
<div class="hnd" style="left:4px;top:134px"></div>
<svg class="abs" style="left:17px;top:134px" width="24" height="24" viewBox="0 0 24 24"><path d="M4 3H1.500v18H4M20 3h2.500v18H20" fill="none" stroke="#3a3a3a" stroke-width="1.100"/><path d="M3.500 7l11-3 6 2.500v11l-11 3-6-2.500z" fill="#4a7cc0" stroke="#1c3c74" stroke-width="1.100" stroke-linejoin="round"/><path d="M3.500 7l6 2.500 11-3-6-2.500z" fill="#8cb4e4" stroke="#1c3c74" stroke-width="1"/><path d="M9.500 9.500v11" stroke="#1c3c74" stroke-width="1.100"/><path d="M9.500 9.500l11-3v11l-11 3z" fill="#35609e"/></svg>
<svg class="abs" style="left:47.3px;top:145px" width="8" height="5"><path d="M0 0h8l-4 4.500z" fill="#444"/></svg>
<svg class="abs" style="left:61.3px;top:134px" width="24" height="24" viewBox="0 0 24 24"><defs><radialGradient id="sb_53" cx=".4" cy=".35" r=".75"><stop offset="0" stop-color="#6c9cd8"/><stop offset=".7" stop-color="#3f70b4"/><stop offset="1" stop-color="#2c558e"/></radialGradient></defs><circle cx="15.500" cy="9" r="8" fill="url(#sb_53)" stroke="#24487e" stroke-width=".9"/><circle cx="8.500" cy="15.500" r="8" fill="url(#sb_53)" stroke="#24487e" stroke-width=".9"/></svg>
<svg class="abs" style="left:94.7px;top:134px" width="24" height="24" viewBox="0 0 24 24"><defs><radialGradient id="sgw_54" cx=".4" cy=".35" r=".75"><stop offset="0" stop-color="#ffffff"/><stop offset="1" stop-color="#e0e0e0"/></radialGradient></defs><circle cx="8.500" cy="15.500" r="8" fill="#b4b4b4" stroke="#a0a0a0" stroke-width=".9"/><circle cx="15.500" cy="9" r="8" fill="url(#sgw_54)" stroke="#a8a8a8" stroke-width="1"/></svg>
<svg class="abs" style="left:127.7px;top:134px" width="24" height="24" viewBox="0 0 24 24"><defs><radialGradient id="sb_55" cx=".4" cy=".35" r=".75"><stop offset="0" stop-color="#6c9cd8"/><stop offset=".7" stop-color="#3f70b4"/><stop offset="1" stop-color="#2c558e"/></radialGradient></defs><path d="M15.500 1a8 8 0 0 1 6.800 12.200c-1.200 2-3.500 3-5.800 3.500a8 8 0 1 1-9.300-9.500A8 8 0 0 1 15.500 1z" fill="url(#sb_55)" stroke="#24487e" stroke-width=".9"/></svg>
<svg class="abs" style="left:160.5px;top:134px" width="24" height="24" viewBox="0 0 24 24"><circle cx="15.500" cy="9" r="8" fill="#fafafa" stroke="#4a4a4a" stroke-width="1.100"/><circle cx="8.500" cy="15.500" r="8" fill="#fafafa" fill-opacity=".6" stroke="#4a4a4a" stroke-width="1.100"/><path d="M7.700 7.500a8 8 0 0 1 8.600 9.500A8 8 0 0 1 7.700 7.500z" fill="#3f70b4" stroke="#24487e" stroke-width=".9"/></svg>
<svg class="abs" style="left:194px;top:134px" width="24" height="24" viewBox="0 0 24 24"><path d="M1.800 1.200h8v7.300h12.500v7.500H9.800v7H1.800z" fill="#4878b8" stroke="#b80c1c" stroke-width="2" stroke-linejoin="miter"/></svg>
<svg class="abs" style="left:224px;top:145px" width="8" height="5"><path d="M0 0h8l-4 4.500z" fill="#444"/></svg>
<svg class="abs" style="left:239.5px;top:134px" width="24" height="24" viewBox="0 0 24 24"><defs><radialGradient id="sb_58" cx=".4" cy=".35" r=".75"><stop offset="0" stop-color="#6c9cd8"/><stop offset=".7" stop-color="#3f70b4"/><stop offset="1" stop-color="#2c558e"/></radialGradient></defs><circle cx="15.500" cy="8.500" r="8" fill="url(#sb_58)" stroke="#24487e" stroke-width=".8"/><circle cx="8.500" cy="15.500" r="8" fill="url(#sb_58)" stroke="#24487e" stroke-width=".8"/><path d="M8 7.600a8 8 0 0 1 8.300 8.600A8 8 0 0 1 8 7.600z" fill="#5a8acc" stroke="#eef4fc" stroke-width="1.400"/></svg>
<svg class="abs" style="left:269px;top:145px" width="8" height="5"><path d="M0 0h8l-4 4.500z" fill="#444"/></svg>
<svg class="abs" style="left:284px;top:134px" width="24" height="24" viewBox="0 0 24 24"><defs><linearGradient id="ck_59" x1="0" y1="0" x2="1" y2="0"><stop offset="0" stop-color="#3f70b4"/><stop offset=".45" stop-color="#6c9cd8"/><stop offset="1" stop-color="#2c558e"/></linearGradient></defs><path d="M12 2L3.500 20c0 1.800 3.500 3 8.500 3s8.500-1.200 8.500-3z" fill="url(#ck_59)" stroke="#1c3c74" stroke-width="1" stroke-linejoin="round"/><path d="M16 8l4 4.500" stroke="#8a6a2a" stroke-width="2.600" stroke-linecap="round"/><circle cx="12.500" cy="5.500" r="5" fill="#dce8f0" stroke="#8a8a8a" stroke-width="1.200"/><circle cx="11" cy="4" r="2" fill="#fff" opacity=".8"/></svg>
<svg class="abs" style="left:316.6px;top:134px" width="24" height="24" viewBox="0 0 24 24"><g opacity=".8"><path d="M1.500 7l12-5 9 3v13l-12 5-9-3z" fill="#b8b8b8" stroke="#8a8a8a" stroke-width="1"/><path d="M1.500 7l9 3 12-5-9-3z" fill="#d4d4d4" stroke="#8a8a8a" stroke-width=".9"/><path d="M10.500 10v13" stroke="#8a8a8a" stroke-width="1"/><path d="M10.500 10l12-5v13l-12 5z" fill="#9e9e9e"/><path d="M3 13l6-5v3c5 0 8 2 8.500 7-2-2.500-4.500-3.500-8.500-3.200V18z" fill="#d0d0d0" stroke="#7c7c7c" stroke-width=".9"/><rect x="14" y="12.500" width="5" height="7" fill="#c8c8c8" stroke="#8a8a8a" stroke-width=".8"/></g></svg>
<svg class="abs" style="left:350.3px;top:134px" width="24" height="24" viewBox="0 0 24 24"><g opacity=".8"><path d="M2 2.500l13 2.500v17L2 19z" fill="#a4a4a4" stroke="#8c8c8c" stroke-width="1"/><path d="M6 6l15.500 1.500c1 4 1 8 0 12L6 21z" fill="#bdbdbd" stroke="#909090" stroke-width="1"/><path d="M9 10h7.500v8H9z" fill="#a0a0a0" stroke="#868686" stroke-width=".9"/><path d="M11.500 12.500h3v4h-3z" fill="#c4c4c4"/></g></svg>
<svg class="abs" style="left:383px;top:134px" width="24" height="24" viewBox="0 0 24 24"><path d="M6.500 3.500l6.500-2 5 1.500v18l-6.500 2.500-5-2z" fill="#4a7cc0" stroke="#1c3c74" stroke-width="1.100" stroke-linejoin="round"/><path d="M6.500 3.500l5 1.800 6.500-2.300-5-1.500z" fill="#8cb4e4" stroke="#1c3c74" stroke-width=".9"/><path d="M11.500 5.300v18" stroke="#1c3c74" stroke-width="1"/><path d="M11.500 5.300l6.500-2.300v18l-6.500 2.500z" fill="#35609e"/><path d="M1 10l8-2.500h14l-8 3.200z" fill="#d4141e" stroke="#a00c14" stroke-width=".7"/><path d="M1 16.500l8-2.500h14l-8 3.200z" fill="#d4141e" stroke="#a00c14" stroke-width=".7"/></svg><!--/TB-->
<div class="tbline" style="top:48px"></div>
<div class="tbline" style="top:87px"></div>
<div class="tbline" style="top:126px"></div>
<div class="tbline" style="top:164px"></div>
<div id="viewport"></div><div id="vpb" class="abs" style="left:250px;top:675px;width:1116px;height:1px;background:#dcdce4"></div><div class="abs" style="left:250px;top:676px;width:1116px;height:1px;background:#c4c4c4"></div><div class="abs" style="left:250px;top:165px;width:1116px;height:1px;background:#e6e6f0"></div>
<svg id="navcube" class="abs" style="left:0;top:0" width="1366" height="768" viewBox="0 0 1366 768">
<g fill="#a19fc3" opacity="1">
<polygon points="1293.6,173.2 1282.2,184.5 1305.1,184.5"/>
<polygon points="1227.6,239.2 1239.3,227.5 1239.3,249.9"/>
<polygon points="1359.4,238.8 1346.7,226.5 1346.7,250.9"/>
<polygon points="1293.6,303.6 1283.2,292.9 1303.7,292.9"/>
<path d="M1273.8 180.0Q1261.4 185.2 1252.8 194.9L1245.7 192.4L1244.3 208.1L1257.6 203.1L1258.5 200.4Q1265.2 191.9 1276.1 187.1Z"/>
<path d="M1312.8 180.0Q1325.1 185.2 1333.7 194.9L1340.8 192.4L1342.3 208.1L1329.0 203.1L1328.0 200.4Q1321.3 191.9 1310.4 187.1Z"/>
</g>
<g stroke-linejoin="round">
<polygon points="1257.8,220.6 1265.6,212.8 1296.9,206.0 1320.3,210.3 1330.1,220.6 1329.5,256.8 1322.3,267.5 1294.9,279.8 1282.6,275.3 1267.6,251.9" fill="#a9a8c6"/>
<polygon points="1267.0,217.3 1297.9,208.7 1317.8,212.2 1323.6,220.1 1286.5,228.5 1274.4,223.6" fill="#cbcbdc"/>
<polygon points="1301.8,210.3 1318.4,212.8 1323.6,220.1 1303.3,224.7" fill="#d4d4e2"/>
<polygon points="1259.2,223.2 1277.4,235.7 1282.6,270.0 1268.6,250.9" fill="#d9d9e6"/>
<polygon points="1287.7,236.8 1325.6,227.1 1324.0,259.1 1292.8,270.8" fill="#dcdce6"/>
<circle cx="1276.4" cy="232.4" r="5.800" fill="#c6c6da"/>
</g>
<path d="M1301.8 211.9L1302.7 238.2M1274.4 253.8L1295.9 249.0" stroke="#444" stroke-width=".8" opacity=".7"/>
<text transform="translate(1306.6 253.2) rotate(-13) skewX(-10) scale(.82 1)" text-anchor="middle" font-family="DejaVu Sans,Liberation Sans,sans-serif" font-weight="bold" font-size="10.200" fill="#111">FRONT</text>
<text x="1270.1" y="226.5" font-family="DejaVu Sans,Liberation Sans,sans-serif" font-size="8" fill="#2222cc">Z</text>
<text transform="translate(1284.2 215.4) rotate(-18)" font-family="DejaVu Sans,Liberation Sans,sans-serif" font-weight="bold" font-size="5" fill="#111">TOP</text>
<path d="M1282.2 290.9L1323.2 272.4" stroke="#c8102c" stroke-width="2.400"/>
<path d="M1282.2 290.9L1267.6 267.5" stroke="#3fdc3f" stroke-width="1.800"/>
<path d="M1282.2 290.9L1273.5 248.0" stroke="#1818d8" stroke-width="2"/>
<rect x="1337.3" y="260.3" width="6" height="6.500" fill="#a8283c" opacity=".9"/>
<rect x="1343.7" y="287.6" width="4.500" height="3.500" fill="#4a4660" opacity=".8"/>
<g opacity=".85"><polygon points="1316.4,285.1 1327.1,281.2 1335.9,284.1 1335.9,294.8 1326.2,299.3 1317.0,295.4" fill="#9a99b8"/><polygon points="1316.4,285.1 1327.1,281.2 1335.9,284.1 1325.6,288.4" fill="#b2b1ca"/><polygon points="1325.6,288.4 1335.9,284.1 1335.9,294.8 1326.2,299.3" fill="#8d8cae"/></g>
<g>
<path d="M1341.100 649.500L1355 645.300" stroke="#b0183c" stroke-width="1.600"/>
<path d="M1341.100 649.500L1335.500 644.500" stroke="#5cb85c" stroke-width="1.600"/>
<path d="M1341.100 649.500L1338.800 632.600" stroke="#28207a" stroke-width="1.800"/>
<text x="1341" y="632.800" font-family="DejaVu Sans,Liberation Sans,sans-serif" font-size="8.500" fill="#111">Z</text>
<text x="1356.500" y="646" font-family="DejaVu Sans,Liberation Sans,sans-serif" font-size="8.500" fill="#111">X</text>
<text x="1336.800" y="646.500" font-family="DejaVu Sans,Liberation Sans,sans-serif" font-size="8.500" fill="#111">Y</text>
</g>
</svg>
<svg id="shape" class="abs" style="left:0;top:0" width="1366" height="768" viewBox="0 0 1366 768">
<defs>
<linearGradient id="gWL" gradientUnits="userSpaceOnUse" x1="366" y1="0" x2="492" y2="0"><stop offset="0" stop-color="#2c2c2c"/><stop offset=".05" stop-color="#575756"/><stop offset=".14" stop-color="#858583"/><stop offset=".32" stop-color="#adadab"/><stop offset=".6" stop-color="#c3c3c0"/><stop offset="1" stop-color="#c3c3bf"/></linearGradient>
<linearGradient id="gWR" gradientUnits="userSpaceOnUse" x1="840" y1="0" x2="888" y2="0"><stop offset="0" stop-color="#bcbcb9"/><stop offset=".4" stop-color="#a6a6a4"/><stop offset=".8" stop-color="#6e6e6d"/><stop offset="1" stop-color="#4a4a4a"/></linearGradient>
<linearGradient id="gH" gradientUnits="userSpaceOnUse" x1="771" y1="0" x2="828" y2="0"><stop offset="0" stop-color="#5e5e5d"/><stop offset=".25" stop-color="#a8a8a6"/><stop offset=".5" stop-color="#c8c8c5"/><stop offset=".75" stop-color="#a0a09e"/><stop offset="1" stop-color="#6c6c6b"/></linearGradient>
</defs>
<g stroke="#fff" stroke-width="1.1" stroke-linejoin="round">
<path d="M828.0 297.1C828.0 297.3 828.0 298.1 827.9 298.6C827.8 299.2 827.7 299.7 827.4 300.3C827.1 300.8 826.8 301.3 826.4 301.9C826.0 302.4 825.5 302.9 824.9 303.5C824.3 304.0 823.7 304.5 823.0 305.0C822.3 305.5 821.5 306.0 820.7 306.5C819.8 306.9 818.9 307.4 818.0 307.8C817.1 308.3 816.1 308.7 815.0 309.1C814.0 309.4 812.9 309.8 811.8 310.1C810.6 310.5 809.5 310.8 808.3 311.0C807.1 311.3 805.9 311.6 804.7 311.8C803.5 312.0 802.2 312.2 801.0 312.3C799.8 312.5 798.5 312.6 797.3 312.7C796.0 312.7 794.8 312.8 793.6 312.8C792.4 312.8 791.2 312.8 790.0 312.7C788.9 312.6 787.7 312.5 786.6 312.4C785.5 312.3 784.4 312.1 783.4 311.9C782.4 311.7 781.4 311.5 780.5 311.2C779.6 310.9 778.7 310.6 777.9 310.3C777.1 310.0 776.4 309.6 775.7 309.2C775.0 308.9 774.4 308.5 773.9 308.0C773.4 307.6 772.9 307.2 772.5 306.7C772.1 306.2 771.8 305.8 771.6 305.3C771.4 304.8 771.3 304.3 771.2 303.7C771.1 303.2 771.2 302.7 771.3 302.2C771.4 301.6 771.5 301.1 771.8 300.5C772.1 300.0 772.4 299.5 772.8 298.9C773.2 298.4 773.7 297.9 774.3 297.3C774.9 296.8 775.5 296.3 776.2 295.8C776.9 295.3 777.7 294.8 778.5 294.3C779.4 293.9 780.3 293.4 781.2 293.0C782.1 292.5 783.1 292.1 784.2 291.7C785.2 291.4 786.3 291.0 787.4 290.7C788.6 290.3 789.7 290.0 790.9 289.8C792.1 289.5 793.3 289.2 794.5 289.0C795.7 288.8 797.0 288.6 798.2 288.5C799.4 288.3 800.7 288.2 801.9 288.1C803.2 288.1 804.4 288.0 805.6 288.0C806.8 288.0 808.0 288.0 809.2 288.1C810.3 288.2 811.5 288.3 812.6 288.4C813.7 288.5 814.8 288.7 815.8 288.9C816.8 289.1 817.8 289.3 818.7 289.6C819.6 289.9 820.5 290.2 821.3 290.5C822.1 290.8 822.8 291.2 823.5 291.6C824.2 291.9 824.8 292.3 825.3 292.8C825.8 293.2 826.3 293.6 826.7 294.1C827.1 294.6 827.4 295.0 827.6 295.5C827.8 296.0 827.9 296.8 828.0 297.1Z" fill="url(#gH)" stroke="none"/>
<path d="M758.6 356.7L787.4 313.0L789.1 328.7L761.7 373.6Z" fill="#555554"/>
<path d="M366.0 425.3C366.3 426.7 366.1 431.0 367.7 433.7C369.2 436.4 371.8 439.0 375.3 441.4C378.8 443.8 383.8 446.3 388.9 448.1C394.0 449.9 399.6 451.3 405.8 452.4C412.0 453.4 419.3 454.3 426.1 454.4C432.9 454.5 439.6 454.0 446.4 453.2C453.2 452.4 459.3 451.4 466.7 449.8C474.1 448.2 486.5 444.9 490.5 443.9L490.5 465.1C485.4 466.3 468.5 470.7 460.0 472.3C451.5 473.9 446.5 474.6 439.7 474.9C432.9 475.2 425.8 474.8 419.3 474.0C412.8 473.2 406.6 471.9 400.7 470.1C394.8 468.3 388.6 465.9 383.8 463.4C379.0 460.9 374.6 458.0 371.9 454.9C369.2 451.8 368.7 449.6 367.7 444.7C366.7 439.8 366.3 428.5 366.0 425.3Z" fill="url(#gWL)"/>
<path d="M490.5 443.9L758.6 356.7L761.7 373.6L490.5 465.1Z" fill="#c3c3bf"/>
<path d="M778.6 349.9L839.9 328.7L841.6 349.9L781.5 370.2Z" fill="#c3c3bf"/>
<path d="M839.9 328.7C843.0 327.3 852.6 323.5 858.5 320.3C864.4 317.1 871.2 313.0 875.5 309.3C879.8 305.6 882.8 300.1 884.3 298.3L884.6 296.0C885.0 297.9 886.8 304.0 887.0 307.6C887.2 311.2 887.5 314.0 885.6 317.7C883.7 321.4 880.0 325.7 875.5 329.6C871.0 333.6 864.1 338.0 858.5 341.4C852.9 344.8 844.4 348.5 841.6 349.9Z" fill="url(#gWR)"/>
<path d="M427.0 413.4L491.0 362.1L494.2 383.8L438.0 429.2C436.8 428.9 432.7 428.1 431.0 427.5C429.3 426.9 428.3 426.1 427.8 425.8Z" fill="#a0a09e"/>
<path d="M491.0 362.1L456.6 374.5C451.0 376.6 432.6 383.2 422.7 387.2C412.8 391.1 404.4 394.8 397.3 398.2C390.2 401.6 384.9 404.4 380.4 407.5C375.9 410.6 372.6 413.8 370.2 416.8C367.8 419.8 366.4 422.5 366.0 425.3C365.6 428.1 366.1 431.0 367.7 433.7C369.2 436.4 371.8 439.0 375.3 441.4C378.8 443.8 383.8 446.3 388.9 448.1C394.0 449.9 399.6 451.3 405.8 452.4C412.0 453.4 419.3 454.3 426.1 454.4C432.9 454.5 439.6 454.0 446.4 453.2C453.2 452.4 459.3 451.4 466.7 449.8C474.1 448.2 486.5 444.9 490.5 443.9L758.6 356.7L787.4 313.0C786.9 312.8 785.4 312.3 784.5 312.1C783.5 311.8 782.6 311.7 781.7 311.5C780.9 311.3 780.0 311.1 779.2 310.8C778.5 310.5 777.7 310.2 777.0 309.9C776.3 309.6 775.7 309.3 775.1 308.9C774.6 308.6 774.0 308.2 773.6 307.8C773.1 307.4 772.7 307.0 772.4 306.6C772.1 306.1 771.8 305.7 771.6 305.2C771.4 304.8 771.3 304.3 771.2 303.9C771.1 303.4 771.1 302.9 771.2 302.4C771.3 301.9 771.4 301.5 771.6 301.0C771.8 300.5 772.1 300.0 772.4 299.5C772.7 299.0 773.1 298.5 773.6 298.0C774.0 297.6 774.6 297.1 775.1 296.6C775.7 296.1 776.3 295.7 777.0 295.2C777.7 294.8 778.4 294.4 779.2 293.9C780.0 293.5 780.8 293.1 781.7 292.7C782.6 292.4 783.5 292.0 784.5 291.6C785.4 291.3 786.4 291.0 787.4 290.7C788.5 290.4 789.5 290.1 790.6 289.8C791.6 289.6 792.7 289.3 793.8 289.1C794.9 288.9 796.1 288.8 797.2 288.6C798.3 288.5 799.4 288.3 800.6 288.2C801.7 288.2 802.8 288.1 803.9 288.1C805.0 288.0 806.1 288.0 807.2 288.0C808.3 288.1 809.4 288.1 810.4 288.2C811.5 288.3 812.5 288.4 813.5 288.5C814.4 288.7 815.4 288.8 816.3 289.0C817.2 289.2 818.1 289.4 818.9 289.7C819.7 289.9 820.5 290.2 821.3 290.5C822.0 290.8 822.7 291.1 823.3 291.4C823.9 291.8 824.5 292.1 825.0 292.5C825.5 292.9 825.9 293.3 826.3 293.7C826.7 294.1 827.0 294.5 827.3 295.0C827.5 295.4 827.7 295.9 827.9 296.3C828.0 296.8 828.0 297.3 828.0 297.7C828.0 298.2 828.0 298.7 827.8 299.2C827.7 299.7 827.5 300.2 827.2 300.7C826.9 301.2 826.6 301.7 826.2 302.1C825.8 302.6 825.3 303.1 824.8 303.6C824.3 304.1 823.7 304.5 823.0 305.0C822.4 305.4 821.7 305.9 821.0 306.3C820.2 306.7 819.4 307.2 818.6 307.6C817.7 308.0 816.9 308.3 815.9 308.7C815.0 309.1 814.1 309.4 813.1 309.7C812.1 310.1 811.0 310.4 810.0 310.6C809.0 310.9 807.9 311.1 806.8 311.4C805.7 311.7 804.0 312.1 803.5 312.3L778.6 349.9L839.9 328.7C843.0 327.3 852.6 323.5 858.5 320.3C864.4 317.1 871.2 313.0 875.5 309.3C879.8 305.6 882.9 301.6 884.3 298.3C885.7 295.1 885.1 292.8 883.9 289.8C882.7 286.8 880.9 283.5 877.2 280.5C873.5 277.5 867.8 274.4 861.9 272.0C856.0 269.6 849.2 267.5 841.6 266.1C834.0 264.7 824.7 263.6 816.2 263.5C807.7 263.4 799.3 264.3 790.8 265.6C782.3 266.9 773.9 268.8 765.4 271.2C756.9 273.6 744.2 278.6 740.0 280.1L591.1 328.8L473.5 420.2C471.8 421.1 467.3 423.8 463.4 425.3C459.4 426.8 454.0 428.4 449.8 429.0C445.6 429.6 441.7 429.7 438.0 429.2C434.3 428.7 430.6 427.8 427.8 426.1C425.1 424.5 421.6 421.4 421.5 419.3C421.4 417.2 426.1 414.4 427.0 413.4Z" fill="#666666" stroke-width="1.3"/>
</g>
<path d="M687.400 273V285.700L690.100 283.500L692.700 288.700L695.500 287.300L692.900 282.500L696.800 282Z" fill="#000" stroke="#fff" stroke-width="1.100" stroke-linejoin="round"/>
</svg>

<div id="panel">
 <div class="t" style="left:4px;top:3px">Vista combinada</div>
 <svg class="abs" style="left:216px;top:4px" width="28" height="12" viewBox="0 0 28 12"><rect x="1.5" y="0.5" width="10" height="10" rx="2" fill="none" stroke="#555"/><rect x="3.5" y="4.5" width="4" height="4" fill="none" stroke="#555"/><path d="M5.5 4.5v-2h4v4h-2" fill="none" stroke="#555"/><rect x="15.5" y="0.5" width="10" height="10" rx="2" fill="none" stroke="#555"/><path d="M18 3l5 5M23 3l-5 5" stroke="#444" stroke-width="2"/></svg>
 <div class="frame" style="left:1px;top:44px;width:243px;height:495px;border-color:#c4c4c4"></div>
 <div class="tabI" style="left:68px;top:22px;width:65px;height:22px"></div>
 <div class="tabA" style="left:1px;top:19px;width:68px;height:26px;border-bottom-color:#f9f9f9"></div>
 <div class="t" style="left:13px;top:26px">Modelo</div>
 <div class="t" style="left:80px;top:27px">Tareas</div>
 <!-- tree -->
 <div class="frame" style="left:2px;top:46px;width:240px;height:226px;background:#fff"></div>
 <div class="hdr" style="left:3px;top:47px;width:238px;height:19px"></div>
 <div class="abs" style="left:173px;top:48px;width:1px;height:17px;background:#cfcfcf"></div>
 <div class="t" style="left:5px;top:50px">Etiquetas &amp; Atributos</div>
 <div class="t" style="left:177px;top:50px;width:64px;overflow:hidden">Descripción</div>
 <div class="t" style="left:6px;top:67px">Aplicación</div>
 <svg class="abs" style="left:9px;top:87px" width="8" height="5"><path d="M0 0h8l-4 4.5z" fill="#666"/></svg>
 <svg class="abs" style="left:26px;top:82px" width="16" height="16" viewBox="0 0 16 16"><path d="M1.500 .5h10l3 3v12h-13z" fill="#f4f4f4" stroke="#8c8c8c" stroke-width=".8"/><path d="M3 8l5-2 4 1.500v5l-5 2.500-4-1.500z" fill="#3f6fb4" stroke="#1c3c74" stroke-width=".7"/><path d="M3 8l4 1.500 5-2M7 9.500v5.500" fill="none" stroke="#1c3c74" stroke-width=".7"/><path d="M7 9.500l5-2v5l-5 2.500z" fill="#2c5592"/><circle cx="10" cy="5" r="3.200" fill="#d4141e" stroke="#8c0c14" stroke-width=".6"/></svg><svg class="abs" style="left:46px;top:100px" width="16" height="16" viewBox="0 0 24 24"><path d="M12 .5L4.500 8H9v6h6V8h4.500z" fill="#4a7cc0" stroke="#1c3c74" stroke-width="1.300" stroke-linejoin="round"/><path d="M1.500 15.500l6-3.500H9v2.500h6V12h1.500l6 3.500v5l-9.500 3-11.500-3z" fill="#8cb4e4" stroke="#1c3c74" stroke-width="1.300" stroke-linejoin="round"/><path d="M1.500 15.500l11.500 3 9.500-3M13 18.500v5" fill="none" stroke="#1c3c74" stroke-width="1.300"/><path d="M13 18.500l9.500-3v5l-9.500 3z" fill="#35609e"/><path d="M1.500 15.500l11.500 3v5l-11.500-3z" fill="#4a7cc0"/></svg><div class="t" style="left:48px;top:84px;font-weight:bold">Gancho mascarilla</div>
 <svg class="abs" style="left:30px;top:103px" width="5" height="9"><path d="M0.5 0l4 4.5-4 4.5z" fill="#444"/></svg>
 <div class="t" style="left:68px;top:102px">Extrude</div>
 <!-- hscroll -->
 <div class="abs" style="left:3px;top:257px;width:238px;height:14px;background:linear-gradient(#e4e4e4,#fbfbfb 40%,#fff);border-top:1px solid #cfcfcf"></div>
 <div class="abs" style="left:3px;top:258px;width:13px;height:13px;background:#f1f1f1;border-right:1px solid #d0d0d0"></div>
 <div class="abs" style="left:228px;top:258px;width:13px;height:13px;background:#f1f1f1;border-left:1px solid #d0d0d0"></div>
 <div class="abs" style="left:201px;top:258px;width:27px;height:13px;background:linear-gradient(#e6e6e6,#dcdcdc);border-left:1px solid #c8c8c8"></div>
 <svg class="abs" style="left:6px;top:260px" width="6" height="9"><path d="M5 0v9l-4.5-4.5z" fill="#444"/></svg>
 <svg class="abs" style="left:232px;top:260px" width="6" height="9"><path d="M1 0v9l4.5-4.5z" fill="#444"/></svg>
 <div id="spdots" class="abs" style="left:117px;top:273px;width:11px;height:1px;background:repeating-linear-gradient(90deg,#bdbdbd 0 1px,transparent 1px 3px)"></div>
 <!-- props -->
 <div class="frame" style="left:4px;top:277px;width:237px;height:236px;background:#fff"></div>
 <div class="hdr" style="left:5px;top:278px;width:220px;height:20px"></div>
 <div class="abs" style="left:104px;top:279px;width:1px;height:18px;background:#cfcfcf"></div>
 <div class="t" style="left:7px;top:282px">Propiedades</div>
 <div class="t" style="left:107px;top:282px">Valor</div>
 <div id="prows" style="position:absolute;left:0;top:298px;width:241px;height:214px;overflow:hidden">
  <div class="grp" style="top:0"><span class="t" style="left:23px">Auto Constraints</span></div>
  <div class="prow alt" style="top:20px"><i></i><b></b><span class="t" style="left:23px">Autoconst…</span><span class="t" style="left:103px">true</span></div>
  <div class="prow" style="top:40px"><i></i><b></b><span class="t" style="left:23px">Avoid Red…</span><span class="t" style="left:103px">true</span></div>
  <div class="grp" style="top:60px"><span class="t" style="left:23px">Display Options</span></div>
  <div class="prow" style="top:80px"><i></i><b></b><span class="t" style="left:23px">Bounding …</span><span class="t" style="left:103px">false</span></div>
  <div class="prow alt" style="top:100px"><i></i><b></b><span class="t" style="left:23px">Display M…</span><span class="t" style="left:103px">Wireframe</span></div>
  <div class="prow" style="top:120px"><i></i><b></b><span class="t" style="left:23px">Show In T…</span><span class="t" style="left:103px">true</span></div>
  <div class="prow alt" style="top:140px"><i></i><b></b><div class="abs" style="left:0;top:0;width:99px;height:20px;background:#3092c8"></div><span class="t" style="left:23px;color:#e8f6ff">Visibility</span><span class="t" style="left:103px">false</span></div>
  <div class="grp" style="top:160px"><span class="t" style="left:23px">Grid</span></div>
  <div class="prow alt" style="top:180px"><i></i><b></b><span class="t" style="left:23px">Grid Size</span><span class="t" style="left:103px">15.00 mm</span></div>
  <div class="prow" style="top:200px"><i></i><b></b><span class="t" style="left:23px">Grid Snap</span><span class="t" style="left:103px">false</span></div>
 </div>
 <!-- vscroll -->
 <div class="abs" style="left:225px;top:278px;width:15px;height:234px;background:linear-gradient(90deg,#e2e2e2,#fafafa 50%,#fff);border-left:1px solid #cfcfcf"></div>
 <div class="abs" style="left:226px;top:278px;width:14px;height:14px;background:#f3f3f3;border-bottom:1px solid #d0d0d0"></div>
 <div class="abs" style="left:226px;top:497px;width:14px;height:15px;background:#f3f3f3;border-top:1px solid #d0d0d0"></div>
 <div class="abs" style="left:226px;top:349px;width:14px;height:148px;background:linear-gradient(90deg,#e6e6e6,#dadada);border-top:1px solid #c8c8c8"></div>
 <svg class="abs" style="left:229px;top:283px" width="9" height="5"><path d="M0 4.5h9l-4.5-4.5z" fill="#444"/></svg>
 <svg class="abs" style="left:229px;top:502px" width="9" height="5"><path d="M0 0h9l-4.5 4.5z" fill="#444"/></svg>
 <!-- bottom tabs -->
 <div class="tabI" style="left:56px;top:513px;width:59px;height:22px;border-radius:0 0 3px 3px"></div>
 <div class="tabA" style="left:2px;top:512px;width:54px;height:26px;border-radius:0 0 3px 3px;border-top-color:#f9f9f9"></div>
 <div class="t" style="left:14px;top:519px">Vista</div>
 <div class="t" style="left:68px;top:518px">Datos</div>
</div>
<div id="status"><svg class="abs" style="left:1147px;top:6px" width="11" height="14" viewBox="0 0 11 14"><rect x="1.2" y="1" width="8.6" height="12" rx="4" fill="none" stroke="#222" stroke-width="1.5"/><rect x="4.3" y="2.5" width="2.4" height="4.5" rx="1" fill="#222"/></svg><div class="t" style="left:1162px;top:7px">Blender</div><svg class="abs" style="left:1210px;top:12px" width="6" height="4"><path d="M0 0h6l-3 3.5z" fill="#555"/></svg><div class="t" style="left:1227px;top:7px">98.52 mm x 44.93 mm</div><div class="t" style="left:2px;top:7px">Preselected: Gancho_mascarilla.Extrude.Face14 (9.325964 mm, 5.545923 mm, 2.000000 mm)</div></div>
<div id="mditab"></div><svg class="abs" style="left:262px;top:682px" width="17" height="17" viewBox="0 0 18 18"><path d="M1 1h10v3.2H5v3h4.5v3H5V17H1z" fill="#cb1a22" stroke="#7d0c12" stroke-width=".6"/><g transform="translate(12 11.6)"><path d="M-1-5.2h2l.4 1.5 1.1.5 1.4-.8 1.4 1.4-.8 1.4.5 1.1 1.5.4v2l-1.5.4-.5 1.1.8 1.4-1.4 1.4-1.4-.8-1.1.5-.4 1.5h-2l-.4-1.5-1.1-.5-1.4.8-1.4-1.4.8-1.4-.5-1.1-1.5-.4v-2l1.5-.4.5-1.1-.8-1.4 1.4-1.4 1.4.8 1.1-.5z" fill="#4a7cc8" stroke="#1f3f78" stroke-width=".7"/><circle r="1.9" fill="#27406e" stroke="#1f3f78" stroke-width=".5"/></g></svg><div class="t" style="left:282px;top:685px">Gancho mascarilla : 1*</div><svg class="abs" style="left:426px;top:684px" width="13" height="13" viewBox="0 0 13 13"><path d="M2 2.5l9 8.5M10.5 1.5l-8 10" stroke="#111" stroke-width="2.2" stroke-linecap="round"/></svg>
<div id="taskbar">
<div class="abs" style="left:0;top:0;width:30px;height:32px;background:#0c0c0c"></div>
<svg class="abs" style="left:3px;top:3px" width="26" height="26" viewBox="0 0 26 26"><g fill="none" stroke="#f2f2f2" stroke-linecap="round" stroke-linejoin="round"><path d="M24 6.500l-6.500-1.500c-1.500-1.800-4-1.500-4.500.5 2.500.5 5 3 5.500 6.500.6 4.500-2.500 8-7.500 11.500" stroke-width="1.700"/><path d="M13 12C10 7 6.500 5 3 5.500c0 4 2.500 8 8 9.500-3 .5-5-.5-6.500-2 1 4 5 6 9.500 4.500" stroke-width="1.600"/><path d="M5.500 8c2 1 4 3 5 5.500" stroke-width="1.100"/></g></svg>
<div class="abs" style="left:36px;top:8px;width:20px;height:15px;background:#5a9aea"></div><div class="abs" style="left:41px;top:23px;width:10px;height:2px;background:#1c3f72"></div>
<div class="abs" style="left:60px;top:0;width:25px;height:32px;background:#5a0a10"></div>
<div class="t" style="left:67px;font-weight:bold;color:#fff">1</div>
<div class="t" style="left:92px;color:#e2e2e2">2</div>
<svg class="abs" style="left:115px;top:5px" width="20" height="21" viewBox="0 0 20 21"><rect x="1" y="0" width="18" height="4" fill="#4a90d9"/><rect x="1" y="3" width="18" height="3" fill="#7cc04a"/><rect x="1" y="5.5" width="18" height="3" fill="#e8cf4a"/><rect x="0" y="8" width="20" height="13" rx="1" fill="#8e8e8e"/><rect x="7" y="12.5" width="6" height="2.2" fill="#f4f4f4"/></svg>
<svg class="abs" style="left:145px;top:6px" width="21" height="19" viewBox="0 0 21 19"><rect width="21" height="18" rx="1.5" fill="#4d4d4d"/><rect x="12" y="1" width="8" height="6" fill="#5e5e5e"/><text x="2.5" y="10" font-family="DejaVu Sans Mono,Liberation Mono,monospace" font-size="8.5" font-weight="bold" fill="#fff">$</text><rect x="8.5" y="9.5" width="6" height="1.6" fill="#fff"/></svg>
<svg class="abs" style="left:176px;top:5px" width="22" height="22" viewBox="0 0 22 22"><circle cx="11" cy="11" r="10.5" fill="#e5694c"/><path d="M7 4c3-2 8-1 9 3l-3 1 2 3-3 1 1 4c-2 2-6 1-7-2-1-4-1-8 1-10z" fill="#3d72c8"/><path d="M2 9c1 6 5 10 11 9-5 4-12 0-11-9z" fill="#d6502f"/></svg>
<svg class="abs" style="left:208px;top:5px" width="20" height="22" viewBox="0 0 20 22"><path d="M10 0l4 1 2-1 3 4-1 3 1 4c0 5-5 8-9 11C6 19 1 16 1 11l1-4-1-3 3-4 2 1z" fill="#e8432c"/><path d="M10 4l4 1 2 3-2 3 1 3-5 4-5-4 1-3-2-3 2-3z" fill="#fff"/><path d="M10 8l2 2-1 3h-2l-1-3z" fill="#e8432c"/></svg>
<svg class="abs" style="left:239px;top:5px" width="19" height="22" viewBox="0 0 19 22"><rect x="2" y="6" width="15" height="14" rx="2" fill="#b7c61e"/><rect x="4" y="3" width="11" height="5" fill="#8fa015"/><ellipse cx="9" cy="14" rx="5" ry="4" fill="#d8e23a"/><rect x="9" y="0" width="9" height="5" fill="#26343c"/><rect x="4" y="19" width="11" height="2" fill="#6b7a10"/></svg>
<svg class="abs" style="left:270px;top:6px" width="21" height="21" viewBox="0 0 21 21"><circle cx="10.5" cy="10.5" r="10" fill="#a4c6ea"/><circle cx="10.5" cy="10.5" r="10" fill="none" stroke="#a9cdee" stroke-width="1"/><circle cx="10.5" cy="10.5" r="4.6" fill="#7fb0e2" stroke="#e6f0fa" stroke-width="1.4"/><path d="M10.5 5.5h9M6 13L2 6M15 13l-4 7" stroke="#5f9bd6" stroke-width="1"/></svg>
<svg class="abs" style="left:305px;top:4px" width="22" height="23" viewBox="0 0 22 23"><defs><linearGradient id="ffg" x1="1" y1="0" x2="0" y2="1"><stop offset="0" stop-color="#ffe03a"/><stop offset=".5" stop-color="#ff8a22"/><stop offset="1" stop-color="#f0306a"/></linearGradient></defs><circle cx="11" cy="12.5" r="10" fill="url(#ffg)"/><path d="M11 2.5c-3 2-4 4-3 6-3 0-5 3-5 6-2-4-1-9 3-11 1 0 2-1 2-3 1 .5 2 1 3 2z" fill="#ffcb2e"/><path d="M19 6c3 5 2 12-3 15 3-4 3-9 0-12z" fill="#ff5a2e"/><circle cx="11.5" cy="12" r="4.400" fill="#7b3ee0"/><path d="M7 11c2-3 6-3 8-1-2-1-4 0-5 1z" fill="#ff7a2a"/><path d="M4 8c3-2 5-1 6 1-2 0-3 1-4 3z" fill="#ff7a2a"/></svg>
<div class="t" style="left:331px">Dibujo - Archivos - ...</div>
<div class="abs" style="left:499px;top:0;width:197px;height:32px;background:#101113"></div><div class="abs" style="left:499px;top:1px;width:197px;height:3px;background:#b3131f"></div>
<svg class="abs" style="left:506px;top:7px" width="19" height="19" viewBox="0 0 18 18"><path d="M1 1h10v3.2H5v3h4.5v3H5V17H1z" fill="#cb1a22" stroke="#7d0c12" stroke-width=".6"/><g transform="translate(12 11.6)"><path d="M-1-5.2h2l.4 1.5 1.1.5 1.4-.8 1.4 1.4-.8 1.4.5 1.1 1.5.4v2l-1.5.4-.5 1.1.8 1.4-1.4 1.4-1.4-.8-1.1.5-.4 1.5h-2l-.4-1.5-1.1-.5-1.4.8-1.4-1.4.8-1.4-.5-1.1-1.5-.4v-2l1.5-.4.5-1.1-.8-1.4 1.4-1.4 1.4.8 1.1-.5z" fill="#4a7cc8" stroke="#1f3f78" stroke-width=".7"/><circle r="1.9" fill="#27406e" stroke="#1f3f78" stroke-width=".5"/></g></svg>
<div class="t" style="left:530px;top:7px">FreeCAD - 2 windows</div>
<div class="abs" style="left:939px;top:0;width:40px;height:32px;background:#6a0a10"></div>
<div class="t" style="left:942px;font-weight:bold;color:#fff">M</div>
<div class="t" style="left:963px;font-weight:bold;color:#fff">N</div>
<div class="t" style="left:983px;font-weight:bold;color:#a8a8a8">D</div>
<div class="t" style="left:1002px;font-weight:bold;color:#c4c4c4">ES</div>
<svg class="abs" style="left:1031px;top:6px" width="21" height="20" viewBox="0 0 21 20"><rect x="5" y="1" width="15" height="11" fill="#2a2a2a" stroke="#dcdcdc" stroke-width="1.2"/><rect x="1" y="5" width="15" height="11" fill="#3a3a3a" stroke="#dcdcdc" stroke-width="1.2"/><rect x="3" y="17.5" width="11" height="1.5" fill="#dcdcdc"/><path d="M9 9l8 4-3 1 2 3-2 1-2-3-2 2z" fill="#e8e8e8"/></svg>
<svg class="abs" style="left:1056px;top:8px" width="21" height="16" viewBox="0 0 21 16"><rect x="0" y="1" width="14" height="14" rx="2" fill="#a9a9a9"/><path d="M14 6l6-4v12l-6-4z" fill="#a9a9a9"/><rect x="2" y="3" width="10" height="10" rx="1" fill="#d8303a"/><path d="M6 5.5v5l4-2.500z" fill="#f4b0b0"/></svg>
<svg class="abs" style="left:1086px;top:5px" width="24" height="24" viewBox="0 0 24 24"><path d="M10 1l7 6-7 6V9H6V5h4z" fill="#5d5d5d"/><path d="M9 9L1 15l8 6v-4h5v-4H9z" fill="#4d4d4d"/><path d="M15.500 15.500l6 6M21.500 15.500l-6 6" stroke="#f0f0f0" stroke-width="2"/></svg>
<svg class="abs" style="left:1112px;top:3px" width="21" height="24" viewBox="0 0 21 24"><path d="M1 4h15v19H1z" fill="#e9d23a"/><rect x="5" y="1" width="7" height="5" fill="#bdbdbd"/><path d="M4 6l14-1 2 12-5 6H6z" fill="#fafafa" stroke="#cfcfcf" stroke-width=".6"/></svg>
<svg class="abs" style="left:1138px;top:4px" width="22" height="22" viewBox="0 0 22 22"><rect x="6" y="6" width="15" height="13" fill="#5c5c5c"/><path d="M6 19l-2 3 5-3z" fill="#5c5c5c"/><circle cx="7" cy="7" r="6.500" fill="#3d8fe6"/><rect x="6" y="2.500" width="2" height="6" fill="#fff"/><rect x="6" y="9.500" width="2" height="2" fill="#fff"/></svg>
<svg class="abs" style="left:1170px;top:5px" width="16" height="22" viewBox="0 0 16 22"><rect x="0" y="0" width="16" height="22" rx="2" fill="#8a8a8a"/><path d="M8 6l4 5H4z" fill="#5a5a5a"/><rect x="4" y="12.500" width="8" height="2" fill="#5a5a5a"/></svg>
<div class="abs" style="left:1194px;top:17px;width:20px;height:15px;background:#12950f"></div>
<svg class="abs" style="left:1219px;top:8px" width="17" height="16" viewBox="0 0 17 16"><path d="M0 5h4l5-5v16l-5-5H0z" fill="#5b5b5b"/><path d="M11 4c2 2 2 6 0 8M13 1.500c4 3.500 4 9.500 0 13" fill="none" stroke="#4b4b4b" stroke-width="1.500"/></svg>
<div class="t" style="left:1245px;color:#ececec">22:55</div>
<svg class="abs" style="left:1304px;top:6px" width="22" height="22" viewBox="0 0 22 22"><rect x="9" y="1" width="12" height="9" fill="#3fae3a" stroke="#cfe9cd" stroke-width=".8"/><rect x="1" y="8" width="12" height="9" fill="#3fae3a" stroke="#cfe9cd" stroke-width=".8"/><rect x="3" y="18" width="8" height="2" fill="#9a9a9a"/><rect x="12" y="11" width="8" height="2" fill="#9a9a9a"/></svg>
<svg class="abs" style="left:1339px;top:5px" width="22" height="22" viewBox="0 0 22 22"><circle cx="11" cy="11" r="10.500" fill="#b8242e"/><circle cx="11" cy="11" r="6" fill="none" stroke="#fff" stroke-width="2.200"/><rect x="9.800" y="5" width="2.400" height="8" fill="#fff" stroke="#b8242e" stroke-width=".8"/></svg>
</div>
</body></html>
